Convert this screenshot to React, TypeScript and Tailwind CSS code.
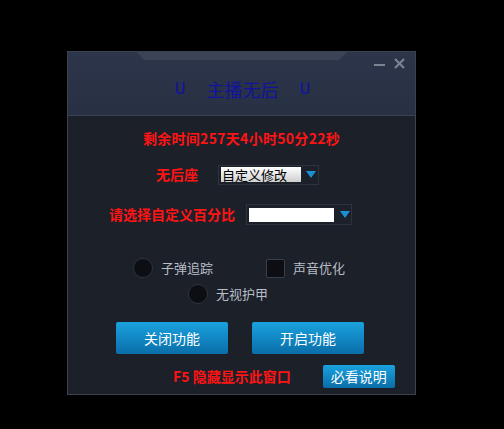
import React from 'react';

const cjk = { fontFamily: '"Noto Sans CJK SC", "Noto Sans", sans-serif' };

const Arrow = () => (
  <svg width="10" height="8" viewBox="0 0 10 8">
    <polygon points="0,0 10,0 5,7" fill="#1b8fd6" />
  </svg>
);

const Radio = ({ label }: { label: string }) => (
  <div className="flex items-center">
    <span className="w-[20px] h-[20px] rounded-full bg-[#0c0e13] border border-[#2e333d]" />
    <span className="ml-[8px] text-[13px] leading-[20px] text-[#b9bdc6]">{label}</span>
  </div>
);

const BlueButton = ({ label, className }: { label: string; className: string }) => (
  <button
    className={`rounded-[2px] bg-gradient-to-b from-[#1aa2df] to-[#0a6ea8] text-white text-[14px] ${className}`}
  >
    {label}
  </button>
);

export default function App() {
  return (
    <div className="w-[504px] h-[429px] bg-black pt-[51px] pl-[67px]" style={cjk}>
      <div className="w-[349px] h-[344px] border border-[#3b4250] bg-[#1b2029] flex flex-col">
        {/* header */}
        <div className="relative h-[64px] bg-gradient-to-b from-[#2c354a] to-[#283043] border-b border-[#3a4355] flex items-center justify-center">
          <svg className="absolute left-[69px] top-0" width="210" height="9" viewBox="0 0 210 9">
            <polygon points="0,0 210,0 202,8 7,8" fill="#3a4456" />
          </svg>
          <div className="absolute right-[10px] top-[6px] flex items-center gap-[9px]">
            <span className="block w-[11px] h-[2px] bg-[#7b8393] mt-[2px]" />
            <svg width="11" height="11" viewBox="0 0 11 11">
              <path d="M1 1 L10 10 M10 1 L1 10" stroke="#7b8393" strokeWidth="2.2" />
            </svg>
          </div>
          <div className="flex items-center text-[18px] text-[#12139c] mt-[12px] ml-[2px]">
            <span style={{ fontFamily: '"Liberation Mono", monospace' }}>U</span>
            <span className="ml-[21px]">主播无后</span>
            <span className="ml-[21px]" style={{ fontFamily: '"Liberation Mono", monospace' }}>U</span>
          </div>
        </div>

        {/* body */}
        <div className="flex flex-col">
          <div className="mt-[12px] text-center text-[14px] leading-[20px] font-bold text-[#ff1414] tracking-[0.3px]">
            剩余时间257天4小时50分22秒
          </div>

          <div className="mt-[16px] flex items-center pl-[88px]">
            <span className="w-[45px] text-[14px] font-bold text-[#ff1414]">无后座</span>
            <div className="ml-[17px] w-[101px] h-[20px] border border-[#2c333f] flex items-center pl-[2px]">
              <div className="w-[80px] h-[15px] bg-gradient-to-b from-white to-[#cfcfcf] text-black text-[13px] leading-[15px] pl-[1px]">
                自定义修改
              </div>
              <span className="ml-[5px] flex">
                <Arrow />
              </span>
            </div>
          </div>

          <div className="mt-[19px] flex items-center pl-[41px]">
            <span className="text-[14px] font-bold text-[#ff1414] whitespace-nowrap">请选择自定义百分比</span>
            <div className="ml-[11px] w-[106px] h-[21px] border border-[#2c333f] flex items-center pl-[2px]">
              <div className="w-[85px] h-[14px] bg-white" />
              <span className="ml-[6px] flex">
                <Arrow />
              </span>
            </div>
          </div>

          <div className="mt-[33px] flex items-center pl-[65px]">
            <Radio label="子弹追踪" />
            <div className="ml-[53px] flex items-center">
              <span className="w-[19px] h-[19px] rounded-[2px] bg-[#0c0e13] border border-[#3a3f49]" />
              <span className="ml-[8px] text-[13px] leading-[20px] text-[#b9bdc6]">声音优化</span>
            </div>
          </div>

          <div className="mt-[6px] flex items-center pl-[120px]">
            <Radio label="无视护甲" />
          </div>

          <div className="mt-[18px] flex pl-[48px] gap-[24px]">
            <BlueButton label="关闭功能" className="w-[112px] h-[32px]" />
            <BlueButton label="开启功能" className="w-[112px] h-[32px]" />
          </div>

          <div className="mt-[11px] flex items-center pl-[105px]">
            <span className="text-[14px] font-bold text-[#ff1414] whitespace-nowrap">F5 隐藏显示此窗口</span>
            <BlueButton label="必看说明" className="ml-[32px] w-[72px] h-[23px]" />
          </div>
        </div>
      </div>
    </div>
  );
}
